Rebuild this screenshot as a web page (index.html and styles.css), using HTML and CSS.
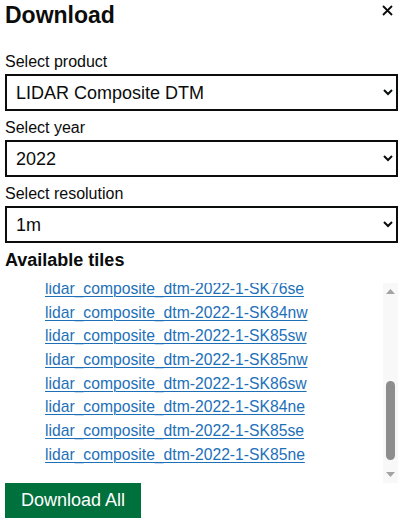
FILE: index.html
```html
<!DOCTYPE html>
<html lang="en">
<head>
<meta charset="utf-8">
<title>Download</title>
<link rel="stylesheet" href="styles.css">
</head>
<body>
<div class="panel">
  <div class="panel-header">
    <h2 class="panel-title">Download</h2>
    <button class="close-btn" aria-label="Close">
      <svg width="11" height="11" viewBox="0 0 11 11"><path d="M1 1 L10 10 M10 1 L1 10" stroke="#0b0c0c" stroke-width="1.8" fill="none"/></svg>
    </button>
  </div>

  <label class="field-label" for="product">Select product</label>
  <select class="field-select" id="product">
    <option>LIDAR Composite DTM</option>
  </select>

  <label class="field-label" for="year">Select year</label>
  <select class="field-select" id="year">
    <option>2022</option>
  </select>

  <label class="field-label" for="res">Select resolution</label>
  <select class="field-select" id="res">
    <option>1m</option>
  </select>

  <h3 class="tiles-title">Available tiles</h3>
  <div class="tiles-box">
    <div class="tiles-scroll" id="tiles">
      <ul class="tiles-list">
        <li><a href="#">lidar_composite_dtm-2022-1-SK74nw</a></li>
        <li><a href="#">lidar_composite_dtm-2022-1-SK74ne</a></li>
        <li><a href="#">lidar_composite_dtm-2022-1-SK75sw</a></li>
        <li><a href="#">lidar_composite_dtm-2022-1-SK75se</a></li>
        <li><a href="#">lidar_composite_dtm-2022-1-SK75nw</a></li>
        <li><a href="#">lidar_composite_dtm-2022-1-SK75ne</a></li>
        <li><a href="#">lidar_composite_dtm-2022-1-SK76sw</a></li>
        <li><a href="#">lidar_composite_dtm-2022-1-SK76se</a></li>
        <li><a href="#">lidar_composite_dtm-2022-1-SK84nw</a></li>
        <li><a href="#">lidar_composite_dtm-2022-1-SK85sw</a></li>
        <li><a href="#">lidar_composite_dtm-2022-1-SK85nw</a></li>
        <li><a href="#">lidar_composite_dtm-2022-1-SK86sw</a></li>
        <li><a href="#">lidar_composite_dtm-2022-1-SK84ne</a></li>
        <li><a href="#">lidar_composite_dtm-2022-1-SK85se</a></li>
        <li><a href="#">lidar_composite_dtm-2022-1-SK85ne</a></li>
      </ul>
    </div>
    <div class="scrollbar" aria-hidden="true">
      <div class="sb-btn">
        <svg width="9" height="5" viewBox="0 0 9 5"><path d="M0 5 L4.5 0 L9 5 Z" fill="#a3a3a3"/></svg>
      </div>
      <div class="sb-track">
        <div class="sb-thumb"></div>
      </div>
      <div class="sb-btn">
        <svg width="9" height="5" viewBox="0 0 9 5"><path d="M0 0 L9 0 L4.5 5 Z" fill="#a3a3a3"/></svg>
      </div>
    </div>
  </div>

  <button class="download-btn">Download All</button>
</div>
<script src="script.js"></script>
</body>
</html>
```

FILE: styles.css
```css
html, body {
  margin: 0;
  padding: 0;
  background: #ffffff;
}

body {
  font-family: "Liberation Sans", Arial, sans-serif;
  color: #0b0c0c;
}

.panel {
  display: flex;
  flex-direction: column;
  align-items: flex-start;
  padding: 0 13px 0 5px;
}

.panel-header {
  display: flex;
  justify-content: space-between;
  align-items: flex-start;
  width: 100%;
  height: 30px;
}

.panel-title {
  margin: 0;
  font-size: 23px;
  line-height: 30px;
  font-weight: 700;
}

.close-btn {
  border: 0;
  background: none;
  padding: 0;
  margin: 5px 5px 0 0;
  width: 11px;
  height: 11px;
  display: block;
  cursor: pointer;
}

.close-btn svg {
  display: block;
}

.field-label {
  display: block;
  font-size: 16px;
  line-height: 25px;
  height: 25px;
  margin-top: 4px;
}

.panel-header + .field-label {
  margin-top: 19px;
}

.field-select {
  display: block;
  width: 100%;
  height: 37px;
  box-sizing: border-box;
  border: 2px solid #0b0c0c;
  border-radius: 0;
  background: #ffffff;
  color: #0b0c0c;
  font-family: "Liberation Sans", Arial, sans-serif;
  font-size: 18px;
  padding: 0 5px;
  margin: 0;
}

.tiles-title {
  margin: 5px 0 11px;
  font-size: 18px;
  line-height: 24px;
  font-weight: 700;
}

.tiles-box {
  display: flex;
  width: 100%;
  height: 200px;
}

.tiles-scroll {
  flex: 1;
  height: 200px;
  overflow: hidden;
}

.tiles-list {
  list-style: none;
  margin: 0;
  padding: 30px 0 34px 40px;
}

.tiles-list li {
  font-size: 15.7px;
  line-height: 23.7px;
  white-space: nowrap;
}

.tiles-list a {
  color: #1d70b8;
  text-decoration: underline;
  text-decoration-thickness: 1px;
  text-underline-offset: 2px;
}

.scrollbar {
  width: 15px;
  display: flex;
  flex-direction: column;
  background: #f8f8f8;
}

.sb-btn {
  height: 17px;
  display: flex;
  align-items: center;
  justify-content: center;
}

.sb-btn svg {
  display: block;
}

.sb-track {
  flex: 1;
  display: flex;
  flex-direction: column;
  align-items: center;
}

.sb-thumb {
  width: 9px;
  height: 79px;
  margin-top: 81px;
  border-radius: 5px;
  background: #8d8d8d;
}

.download-btn {
  display: block;
  margin: 0;
  border: 0;
  border-radius: 0;
  background: #00703c;
  color: #ffffff;
  font-family: "Liberation Sans", Arial, sans-serif;
  font-size: 18px;
  height: 35px;
  padding: 0 16px;
  box-shadow: 0 3px 0 #002d18;
  cursor: pointer;
}
```

FILE: script.js
```js
document.getElementById('tiles').scrollTop = 202;
```
